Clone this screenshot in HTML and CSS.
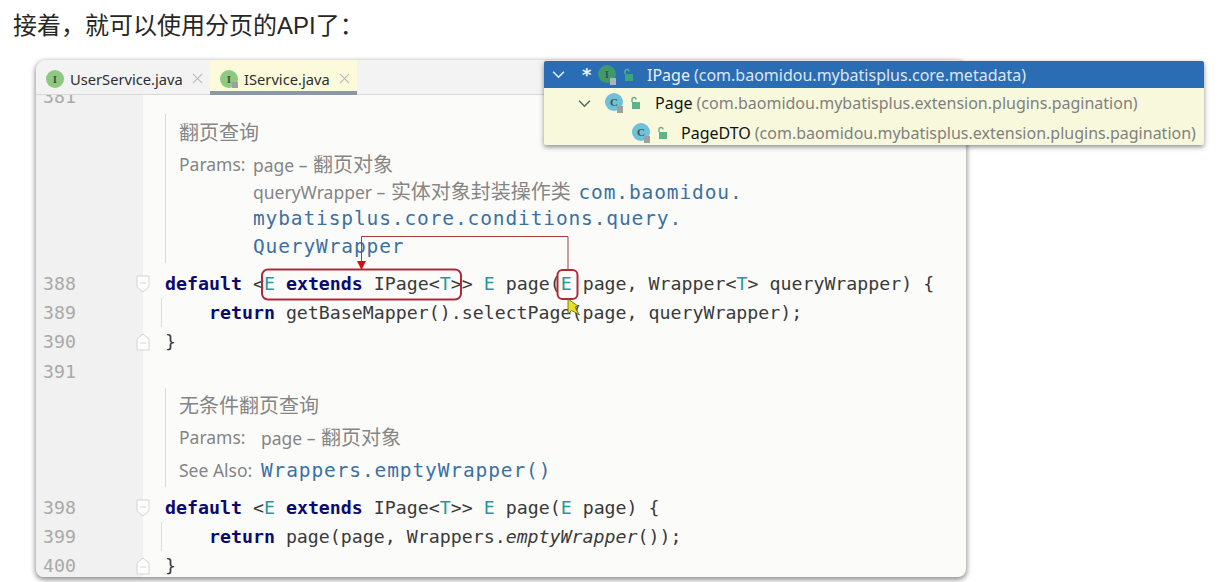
FILE: index.html
```html
<!DOCTYPE html>
<html lang="zh">
<head>
<meta charset="utf-8">
<title>分页API</title>
<link rel="stylesheet" href="styles.css">
</head>
<body>
<h1 class="heading">接着，就可以使用分页的API了：</h1>
<main class="window">
  <div class="tabs">
    <div class="tab">
      <svg class="icon" viewBox="0 0 18 18"><circle cx="9" cy="9" r="9" fill="#8dc97f"/><text x="9" y="13" class="glyph">I</text></svg>
      <span>UserService.java</span>
      <svg class="close" viewBox="0 0 12 12"><path d="M1 1l10 10M11 1L1 11"/></svg>
    </div>
    <div class="tab active">
      <svg class="icon" viewBox="0 0 18 18"><circle cx="9" cy="9" r="9" fill="#8dc97f"/><text x="9" y="13" class="glyph">I</text><rect x="12" y="12" width="6" height="6" fill="#9aa0a4"/></svg>
      <span>IService.java</span>
      <svg class="close" viewBox="0 0 12 12"><path d="M1 1l10 10M11 1L1 11"/></svg>
    </div>
  </div>
  <div class="editor">
    <div class="row clipped"><div class="gutter"><span class="num">381</span></div><div class="code"></div></div>

    <section class="doc-row first">
      <div class="gutter"></div>
      <div class="doc">
        <div class="doc-title tall">翻页查询</div>
        <div class="doc-line"><span class="label">Params:</span><span>page – <span class="zh">翻页对象</span></span></div>
        <div class="doc-line"><span class="label"></span><span>queryWrapper – <span class="zh">实体对象封装操作类</span> <a class="link inline">com.baomidou.</a></span></div>
        <div class="doc-line"><span class="label"></span><a class="link">mybatisplus.core.conditions.query.</a></div>
        <div class="doc-line last"><span class="label"></span><a class="link">QueryWrapper</a></div>
      </div>
    </section>

    <div class="row"><div class="gutter"><span class="num">388</span><svg class="fold" viewBox="0 0 14 18"><path d="M1 1h12v11l-6 5-6-5z"/><path d="M4 8h6"/></svg></div><div class="code"><b>default</b> &lt;<i>E</i> <b>extends</b> IPage&lt;<i>T</i>&gt;&gt; <i>E</i> page(<i>E</i> page, Wrapper&lt;<i>T</i>&gt; queryWrapper) {</div></div>
    <div class="row"><div class="gutter"><span class="num">389</span></div><div class="code guide">    <b>return</b> getBaseMapper().selectPage(page, queryWrapper);</div></div>
    <div class="row"><div class="gutter"><span class="num">390</span><svg class="fold" viewBox="0 0 14 18"><path d="M1 17h12V6L7 1 1 6z"/><path d="M4 10h6"/></svg></div><div class="code">}</div></div>
    <div class="row"><div class="gutter"><span class="num">391</span></div><div class="code"></div></div>

    <section class="doc-row second">
      <div class="gutter"></div>
      <div class="doc">
        <div class="doc-title">无条件翻页查询</div>
        <div class="doc-line loose"><span class="label wide">Params:</span><span>page – <span class="zh">翻页对象</span></span></div>
        <div class="doc-line loose"><span class="label wide">See Also:</span><a class="link">Wrappers.emptyWrapper()</a></div>
      </div>
    </section>

    <div class="row"><div class="gutter"><span class="num">398</span><svg class="fold" viewBox="0 0 14 18"><path d="M1 1h12v11l-6 5-6-5z"/><path d="M4 8h6"/></svg></div><div class="code"><b>default</b> &lt;<i>E</i> <b>extends</b> IPage&lt;<i>T</i>&gt;&gt; <i>E</i> page(<i>E</i> page) {</div></div>
    <div class="row"><div class="gutter"><span class="num">399</span></div><div class="code guide">    <b>return</b> page(page, Wrappers.<em>emptyWrapper</em>());</div></div>
    <div class="row"><div class="gutter"><span class="num">400</span><svg class="fold" viewBox="0 0 14 18"><path d="M1 17h12V6L7 1 1 6z"/><path d="M4 10h6"/></svg></div><div class="code">}</div></div>
  </div>
</main>

<aside class="hierarchy">
  <div class="node selected">
    <svg class="chev" viewBox="0 0 14 10"><path d="M1 2l6 6 6-6"/></svg>
    <span class="star">*</span>
    <svg class="icon small" viewBox="0 0 20 20"><circle cx="9" cy="9" r="9" fill="#3f9a6a"/><text x="9" y="13" class="glyph">I</text><rect x="12" y="13" width="6" height="7" fill="#aab4bc"/></svg>
    <svg class="lock" viewBox="0 0 12 14"><path class="shackle" d="M3 6V3.5a2 2 0 0 1 4 0"/><rect x="3" y="6" width="8" height="7" fill="#3aa679"/></svg>
    <span class="name">IPage</span><span class="pkg">(com.baomidou.mybatisplus.core.metadata)</span>
  </div>
  <div class="node level1">
    <svg class="chev" viewBox="0 0 14 10"><path d="M1 2l6 6 6-6"/></svg>
    <svg class="icon small" viewBox="0 0 20 20"><circle cx="9" cy="9" r="9" fill="#6fc0d8"/><text x="9" y="13" class="glyph">C</text><rect x="12" y="13" width="6" height="7" fill="#9aa0a4"/></svg>
    <svg class="lock" viewBox="0 0 12 14"><path class="shackle" d="M3 6V3.5a2 2 0 0 1 4 0"/><rect x="3" y="6" width="8" height="7" fill="#5cb58a"/></svg>
    <span class="name">Page</span><span class="pkg">(com.baomidou.mybatisplus.extension.plugins.pagination)</span>
  </div>
  <div class="node level2">
    <svg class="icon small" viewBox="0 0 20 20"><circle cx="9" cy="9" r="9" fill="#6fc0d8"/><text x="9" y="13" class="glyph">C</text><rect x="12" y="13" width="6" height="7" fill="#9aa0a4"/></svg>
    <svg class="lock" viewBox="0 0 12 14"><path class="shackle" d="M3 6V3.5a2 2 0 0 1 4 0"/><rect x="3" y="6" width="8" height="7" fill="#5cb58a"/></svg>
    <span class="name">PageDTO</span><span class="pkg">(com.baomidou.mybatisplus.extension.plugins.pagination)</span>
  </div>
</aside>

<svg class="markup" viewBox="0 0 1226 582">
  <rect class="box" x="262" y="269.5" width="199" height="30" rx="6"/>
  <rect class="box" x="557.5" y="270" width="20" height="29" rx="5"/>
  <path class="wire" d="M568 270V236.5H361.5V262"/>
  <path class="arrow" d="M357 261h9l-4.500 9z"/>
  <path class="cursor" d="M568 299l0 15 3.500-3.500 3 1.500 5 3-3-5-1.500-3 3-1z"/>
</svg>
</body>
</html>
```
FILE: styles.css
```css
* { box-sizing: border-box; }
html, body { margin: 0; height: 582px; overflow: hidden; background: #fff; }
body {
  position: relative;
  padding: 60px 260px 0 36px;
  font-family: "Noto Sans", "Noto Sans CJK SC", sans-serif;
}
.heading {
  position: absolute;
  left: 13px;
  top: 9px;
  margin: 0;
  font: 400 24px/34px "Liberation Sans", "Noto Sans CJK SC", sans-serif;
  color: #262626;
}
.window {
  width: 930px;
  height: 517px;
  overflow: hidden;
  border-radius: 10px 10px 8px 8px;
  background: #fbfcfa;
  box-shadow: 0 2px 5px 1px rgba(0, 0, 0, .42);
}
.tabs {
  display: flex;
  height: 35px;
  background: #f3f3f3;
  border-bottom: 1px solid #d8d8d8;
}
.tab {
  display: flex;
  align-items: center;
  gap: 6px;
  height: 35px;
  padding: 3px 8px 0 10px;
  font-size: 14.700px;
  color: #2e2e2e;
}
.tab:first-child { width: 174px; }
.tab.active {
  width: 147px;
  padding-top: 7px;
  background: #fbfbdc;
  border-bottom: 4px solid #8c99a5;
}
.icon { width: 18px; height: 18px; flex: none; }
.glyph {
  font: 700 11px "Liberation Serif", serif;
  text-anchor: middle;
  fill: #44504a;
}
.close { width: 11px; height: 11px; margin: 0 0 2px 3px; flex: none; }
.close path { fill: none; stroke: #b9b9b9; stroke-width: 1.2; }

.editor { display: flex; flex-direction: column; }
.row { display: flex; height: 29.4px; }
.row.clipped { height: 17px; overflow: hidden; }
.row.clipped .gutter { align-items: flex-start; }
.gutter {
  position: relative;
  display: flex;
  align-items: center;
  flex: none;
  width: 107px;
  padding-left: 7px;
  background: #f0f1f0;
  align-self: stretch;
}
.num {
  font: 18.200px/29.400px "DejaVu Sans Mono", monospace;
  color: #a9a9a9;
}
.clipped .num { margin-top: -12.700px; }
.fold {
  position: absolute;
  right: -7px;
  top: 6px;
  width: 14px;
  height: 18px;
}
.fold path { fill: #fdfdfd; stroke: #d4d4d4; stroke-width: 1; }
.code {
  flex: 1;
  padding-left: 22px;
  white-space: pre;
  font: 18.250px/29.400px "DejaVu Sans Mono", monospace;
  color: #3a3a3a;
}
.code b { color: #0b0b6e; font-weight: 700; }
.code i { color: #239a9e; font-style: normal; }
.code em { font-style: italic; }
.code.guide { background: linear-gradient(#dcdcdc, #dcdcdc) 18px 0 / 1px 100% no-repeat; }

.doc-row { display: flex; }
.doc-row.first { height: 156.500px; }
.doc-row.second { height: 106.500px; }
.doc {
  flex: 1;
  margin-left: 22px;
  padding-left: 13px;
  border-left: 1px solid #d9d9d9;
  font-size: 17.500px;
  color: #858585;
}
.first .doc { margin-top: 2px; margin-bottom: 6px; }
.second .doc { margin-top: 2px; margin-bottom: 5.500px; }
.zh { font-size: 20px; margin-left: 1px; }
.doc-title { height: 33px; line-height: 35px; font-size: 20px; }
.doc-title.tall { height: 36.500px; line-height: 38px; }
.doc-line { display: flex; height: 27px; line-height: 27px; white-space: pre; }
.doc-line.last { line-height: 28px; }
.doc-line.loose { height: 33px; line-height: 33px; }
.label { width: 74px; flex: none; }
.label.wide { width: 82px; }
.link {
  font: 19.500px/27px "DejaVu Sans Mono", monospace;
  letter-spacing: .88px;
  color: #3b70a3;
}
.link.inline { margin-left: 3px; }
.last .link { line-height: 29px; }
.loose .link { line-height: 33px; }

.hierarchy {
  position: absolute;
  left: 544px;
  top: 61px;
  width: 660px;
  height: 84px;
  background: #f8f9dc;
  border-radius: 2px;
  box-shadow: 0 2px 5px rgba(0, 0, 0, .45);
  font-size: 16px;
}
.node {
  display: flex;
  align-items: center;
  white-space: pre;
}
.node.selected { height: 27px; background: #2a6db5; color: #e8eef5; padding-left: 8px; border-radius: 2px 2px 0 0; }
.node.level1 { height: 30px; padding-left: 34px; color: #111; }
.node.level2 { height: 27px; padding: 3px 0 0 88px; color: #111; }
.chev { width: 13px; height: 9px; flex: none; }
.chev path { fill: none; stroke: #566; stroke-width: 1.700; }
.selected .chev path { stroke: #e8f0f8; }
.star { width: 14px; margin-left: 17px; font: 700 18px/18px "DejaVu Sans", sans-serif; color: #eef3f8; }
.icon.small { width: 20px; height: 20px; margin-left: 2px; }
.level1 .icon.small { margin-left: 14px; }
.level2 .icon.small { margin-left: 0; }
.lock { width: 12px; height: 14px; margin-left: 4px; margin-right: 13px; flex: none; }
.level1 .lock { margin-right: 14px; }
.level2 .lock { margin-right: 13px; }
.shackle { fill: none; stroke: #5cb58a; stroke-width: 1.400; }
.name { margin-right: 4px; }
.selected .name { color: #e8eef5; }
.pkg { color: #808080; }
.selected .pkg { color: #dde6f0; }

.markup {
  position: absolute;
  left: 0;
  top: 0;
  width: 1226px;
  height: 582px;
  pointer-events: none;
}
.box { fill: none; stroke: #ad2b38; stroke-width: 2; }
.wire { fill: none; stroke: #a83a3f; stroke-width: 1; }
.arrow { fill: #d01010; }
.cursor { fill: #e8e020; stroke: #5a5a20; stroke-width: .8; }
```
